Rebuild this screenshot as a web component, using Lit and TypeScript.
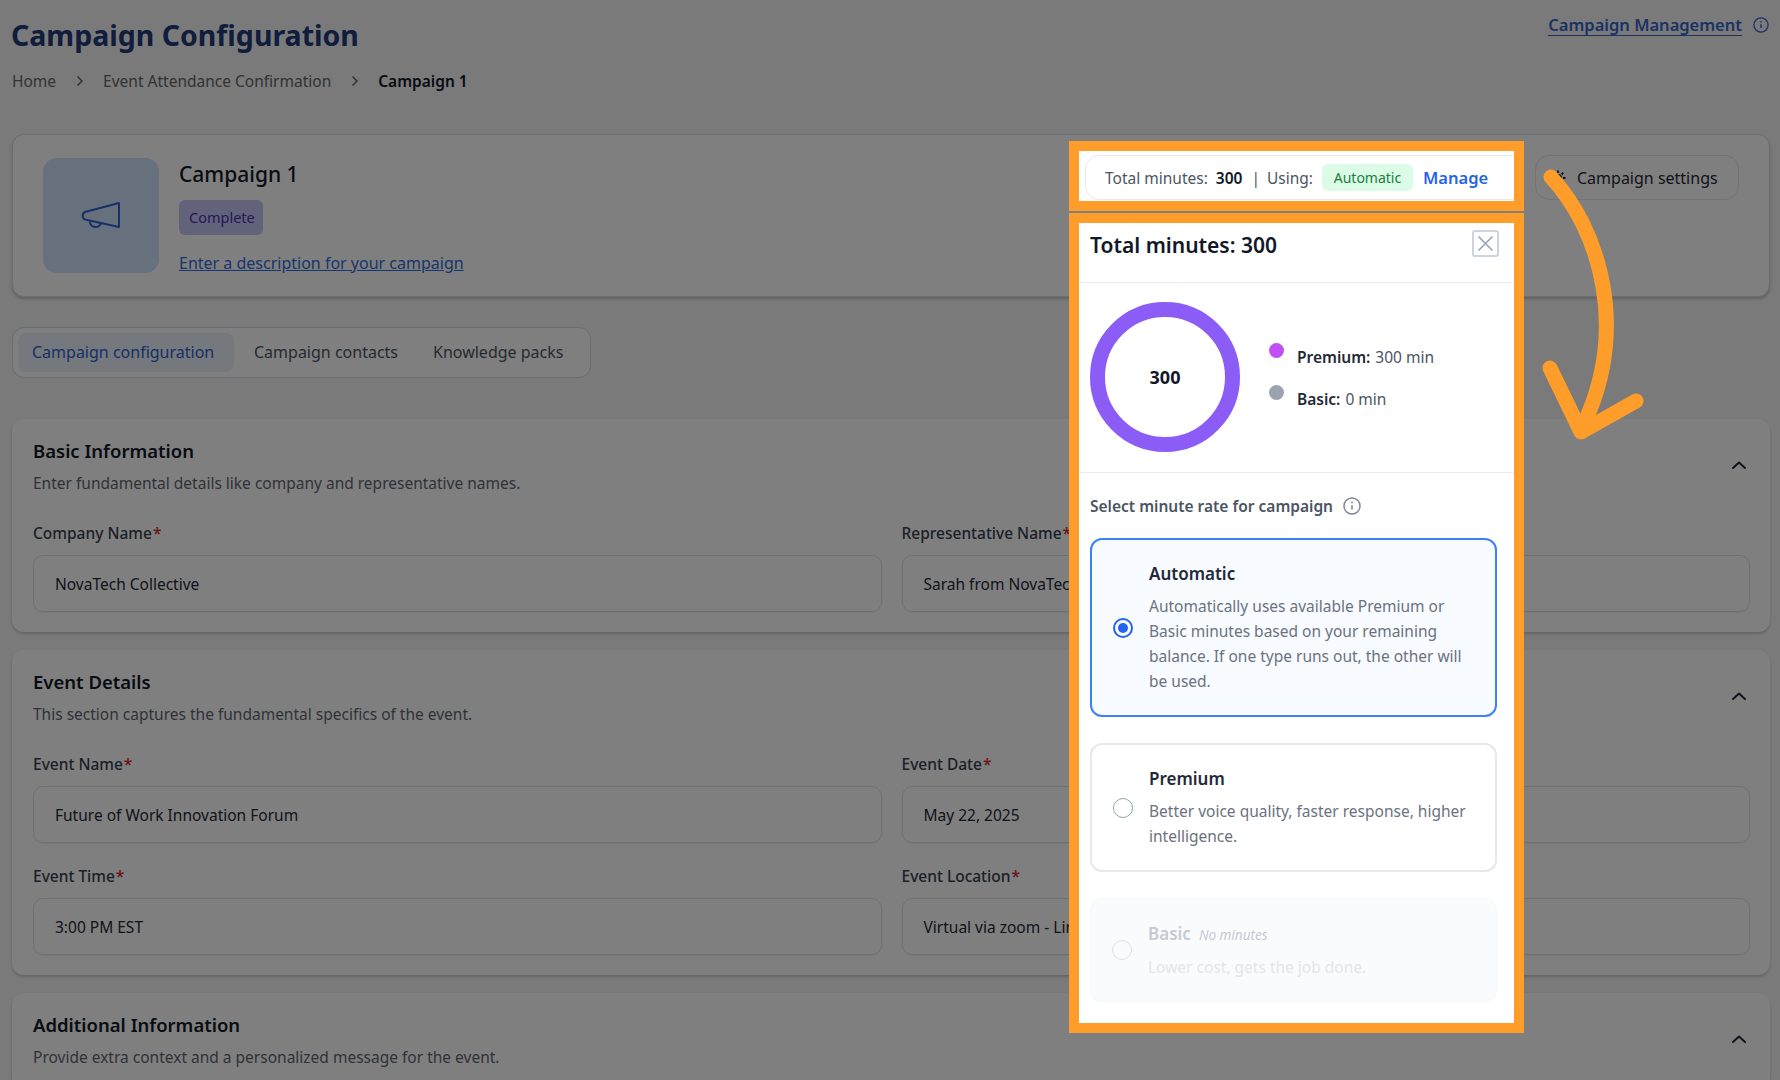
import { LitElement, html, css, svg } from "lit";
import { customElement } from "lit/decorators.js";

const info = (size: number, color: string) => html`<svg width=${size} height=${size} viewBox="0 0 18 18" fill="none" stroke=${color} stroke-width="1.4"><circle cx="9" cy="9" r="8"/><path d="M9 8.2v4.3" stroke-width="1.6"/><circle cx="9" cy="5.5" r=".9" fill=${color} stroke="none"/></svg>`;
const chevron = html`<svg class="chev" width="16" height="10" viewBox="0 0 16 10" fill="none" stroke="#1f2937" stroke-width="2" stroke-linecap="round" stroke-linejoin="round"><path d="M2 8l6-5.5L14 8"/></svg>`;
const crumbSep = html`<svg width="8" height="12" viewBox="0 0 8 12" fill="none" stroke="#666" stroke-width="1.5"><path d="M1.5 1.5L6 6l-4.5 4.5"/></svg>`;

interface Field { label: string; value: string; }
interface Section { title: string; desc: string; fields: Field[]; }

const sections: Section[] = [
  { title: "Basic Information", desc: "Enter fundamental details like company and representative names.", fields: [
    { label: "Company Name", value: "NovaTech Collective" },
    { label: "Representative Name", value: "Sarah from NovaTech" },
  ] },
  { title: "Event Details", desc: "This section captures the fundamental specifics of the event.", fields: [
    { label: "Event Name", value: "Future of Work Innovation Forum" },
    { label: "Event Date", value: "May 22, 2025" },
    { label: "Event Time", value: "3:00 PM EST" },
    { label: "Event Location", value: "Virtual via zoom - Link" },
  ] },
  { title: "Additional Information", desc: "Provide extra context and a personalized message for the event.", fields: [] },
];

@customElement("app-root")
export class AppRoot extends LitElement {
  static styles = css`
    :host { display: block; position: relative; width: 1780px; height: 1080px; overflow: hidden; background: #f4f4f6;
      font-family: "Noto Sans", "Open Sans", sans-serif; font-size: 15.5px; color: #1f2937; }
    * { box-sizing: border-box; }
    .page { padding: 15px 10px 0 12px; }
    .top { display: flex; justify-content: space-between; }
    h1 { margin: 0; font-size: 28.5px; line-height: 40px; font-weight: 700; color: #213a78; margin-left: -1px; }
    .mgmt { display: flex; align-items: flex-start; gap: 11px; margin-right: 1px; margin-top: -1px; }
    .mgmt a { font-size: 16.5px; font-weight: 600; line-height: 21px; color: #3566c9; border-bottom: 1.5px solid #3566c9; }
    .mgmt svg { margin-top: 3px; }
    .crumbs { display: flex; align-items: center; margin-top: 14px; line-height: 24px; color: #666; }
    .crumbs svg { margin: 0 19px 0 20px; }
    .crumbs b { color: #101828; font-weight: 600; }
    .hero { margin-top: 41px; height: 163px; background: #fff; border: 1px solid #d4dae3; border-radius: 12px; padding: 23px 30px;
      display: flex; box-shadow: 0 2px 3px rgba(0,0,0,.2); justify-content: space-between; }
    .tile { width: 116px; height: 115px; border-radius: 14px; background: #cfe0fa; display: flex; align-items: center; justify-content: center; }
    .hero-l { display: flex; gap: 20px; }
    .name { font-size: 21px; font-weight: 500; line-height: 30px; margin-top: 1px; color: #111827; }
    .badge { display: inline-block; margin-top: 11px; height: 35px; line-height: 35px; padding: 0 10px; width: 84px; text-align: center; font-size: 14.5px; border-radius: 6px; background: #c4c6f4; color: #4c2fb0; }
    .desc-link { display: block; margin-top: 16px; line-height: 24px; color: #2f6bdc; text-decoration: underline; font-size: 16px; }
    .settings { width: 204px; height: 45px; margin-top: -3px; margin-right: 0; border: 1px solid #e2e6ec; border-radius: 14px; display: flex; align-items: center; padding-left: 12px; gap: 9px; color: #1f2937; font-size: 16px; }
    .tabs { margin-top: 30px; width: 579px; height: 51px; border: 1px solid #d4dae3; border-radius: 12px; padding: 5px; display: flex; align-items: center; background: #fff; }
    .tab { height: 39px; line-height: 39px; padding: 0 14px; margin-right: 7px; border-radius: 8px; color: #4b5563; white-space: nowrap; font-size: 16px; }
    .tab.on { background: #eaf2fc; color: #2f5fc9; padding: 0 14px; margin-right: 6px; width: 216px; }
    .section { margin-top: 18px; background: #fff; border-radius: 12px; padding: 20px 20px 20px 21px; box-shadow: 0 2px 3px rgba(0,0,0,.18); }
    .section:first-of-type { margin-top: 41px; }
    .s-head { display: flex; justify-content: space-between; align-items: center; }
    .s-head h2 { margin: 0; font-size: 18.5px; line-height: 24px; font-weight: 600; color: #111827; }
    .s-head p { margin: 8px 0 0; line-height: 24px; color: #5f6673; font-size: 15.5px; }
    .chev { margin: 0 3px 4px 0; }
    .grid { display: grid; grid-template-columns: 1fr 1fr; gap: 21px 20px; margin-top: 26px; }
    .grid:empty { display: none; }
    .grid label { display: block; line-height: 24px; font-weight: 500; color: #374151; font-size: 15.5px; }
    .grid label i { color: #dc2626; font-style: normal; margin-left: 1px; }
    .input { margin-top: 10px; height: 57px; border: 1px solid #dde1e7; border-radius: 10px; padding: 0 21px; display: flex; align-items: center; color: #1f2937; box-shadow: 0 1px 2px rgba(0,0,0,.06); }
    .dim { position: absolute; inset: 0; background: rgba(0,0,0,.5); }

    .frame { position: absolute; left: 1069px; width: 455px; border: 10px solid #ff9d2a; background: #fff; overflow: hidden; }
    .f1 { top: 141px; height: 70px; padding: 4px 0 1px 6px; }
    .pill { width: 460px; height: 45px; border: 1.5px solid #e5e9f2; border-radius: 14px; display: flex; align-items: center; padding-left: 19px; color: #4b5563; font-size: 15.5px; white-space: nowrap; }
    .pill b { color: #111827; font-weight: 600; margin-left: 8px; }
    .pill .bar { margin: 0 7px 0 9px; }
    .chip { margin-left: 9px; width: 91px; height: 27px; line-height: 27px; text-align: center; background: #dcfce7; color: #15803d; border-radius: 6px; font-size: 14px; }
    .manage { margin-left: 10px; color: #2563eb; font-weight: 600; font-size: 16.5px; }
    .f2 { top: 213px; height: 820px; display: flex; flex-direction: column; }
    .p-head { height: 60px; flex: none; border-bottom: 1.5px solid #e8ebf0; display: flex; justify-content: space-between; align-items: flex-start; padding: 7px 15px 0 11px; }
    .p-head h3 { margin: 0; font-size: 21px; line-height: 30px; font-weight: 600; color: #111827; }
    .close { width: 27px; height: 27px; border: 2px solid #cbd5e1; border-radius: 3px; display: flex; align-items: center; justify-content: center; }
    .usage { height: 190px; flex: none; border-bottom: 1.5px solid #e8ebf0; padding: 19px 11px; display: flex; align-items: flex-start; }
    .ring { width: 150px; height: 150px; border-radius: 50%; border: 15px solid #8b5cf6; display: flex; align-items: center; justify-content: center; font-weight: 700; font-size: 18px; color: #111827; flex: none; }
    .legend { margin-left: 29px; margin-top: 41px; display: flex; flex-direction: column; gap: 16px; }
    .leg { display: flex; align-items: flex-start; line-height: 24px; color: #4b5563; }
    .leg span.dot { width: 15px; height: 15px; border-radius: 50%; margin: 5px 10px 0 0; margin-top: 0; }
    .leg b { color: #1f2937; font-weight: 600; margin-right: 5px; }
    .leg-t { margin-top: 2px; margin-left: 3px; }
    .rate { margin: 21px 0 0 11px; display: flex; align-items: center; gap: 10px; font-weight: 600; color: #4b5563; line-height: 24px; font-size: 15.5px; }
    .opt { margin: 20px 16px 0 11px; width: 407px; border: 2px solid #e5e8ed; border-radius: 12px; display: flex; align-items: center; padding: 0 21px 0 21px; }
    .opt + .opt { margin-top: 26px; }
    .opt.sel { height: 179px; border-color: #3b82f6; background: #f8fbff; }
    .opt.prem { height: 129px; }
    .opt.off { height: 104px; background: #fafbfc; border-color: #f6f7f9; border-width: 1px; }
    .radio { flex: none; width: 20px; height: 20px; border-radius: 50%; border: 1.5px solid #94a3b8; margin-right: 16px; }
    .sel .radio { border: 2px solid #2563eb; padding: 3px; background: #2563eb content-box; }
    .off .radio { border-color: #dde1e7; }
    .opt h4 { margin: 0 0 8px; font-size: 17px; line-height: 25px; font-weight: 600; color: #1f2937; }
    .opt p { margin: 0; line-height: 25px; color: #6b7280; font-size: 15.5px; }
    .off h4 { color: #c5cad3; margin-bottom: 7px; }
    .off h4 em { font-size: 13.5px; font-weight: 400; margin-left: 8px; color: #c5cad3; }
    .off p { color: #e3e6eb; }
    .arrow { position: absolute; left: 1530px; top: 160px; }
  `;

  renderSection(s: Section) {
    return html`<section class="section">
      <div class="s-head"><div><h2>${s.title}</h2><p>${s.desc}</p></div>${chevron}</div>
      <div class="grid">${s.fields.map(f => html`<div><label>${f.label}<i>*</i></label><div class="input">${f.value}</div></div>`)}</div>
    </section>`;
  }

  render() {
    return html`
      <div class="page">
        <div class="top">
          <h1>Campaign Configuration</h1>
          <div class="mgmt"><a>Campaign Management</a>${info(16, "#3566c9")}</div>
        </div>
        <div class="crumbs"><span>Home</span>${crumbSep}<span>Event Attendance Confirmation</span>${crumbSep}<b>Campaign 1</b></div>
        <div class="hero">
          <div class="hero-l">
            <div class="tile"><svg width="40" height="30" viewBox="0 0 40 30" fill="none" stroke="#2f62d0" stroke-width="2" stroke-linejoin="round"><path d="M38 2v24L4 18.5C1 17.800 1 12 4 11z"/><path d="M9 20.500c0 7 10 7 11 1.500"/></svg></div>
            <div>
              <div class="name">Campaign 1</div>
              <span class="badge">Complete</span>
              <a class="desc-link">Enter a description for your campaign</a>
            </div>
          </div>
          <div class="settings"><svg width="20" height="20" viewBox="0 0 20 20" fill="none" stroke="#1f2937" stroke-width="1.800"><circle cx="10" cy="10" r="3"/><path d="M10 2.500v2.500M10 15v2.500M2.500 10H5M15 10h2.500M4.700 4.700l1.800 1.800M13.500 13.500l1.800 1.800M15.300 4.700l-1.800 1.800M6.500 13.500l-1.800 1.800"/></svg>Campaign settings</div>
        </div>
        <div class="tabs"><div class="tab on">Campaign configuration</div><div class="tab">Campaign contacts</div><div class="tab">Knowledge packs</div></div>
        <div>${sections.map(s => this.renderSection(s))}</div>
      </div>
      <div class="dim"></div>

      <div class="frame f1"><div class="pill">Total minutes:<b>300</b><span class="bar">|</span>Using:<span class="chip">Automatic</span><span class="manage">Manage</span></div></div>
      <div class="frame f2">
        <div class="p-head"><h3>Total minutes: 300</h3><div class="close"><svg width="17" height="17" viewBox="0 0 17 17" stroke="#94a3b8" stroke-width="1.600"><path d="M1.500 1.500l14 14M15.500 1.500l-14 14"/></svg></div></div>
        <div class="usage">
          <div class="ring">300</div>
          <div class="legend">
            <div class="leg"><span class="dot" style="background:#c04ff5"></span><span class="leg-t"><b>Premium:</b>300 min</span></div>
            <div class="leg"><span class="dot" style="background:#9ca3af"></span><span class="leg-t"><b>Basic:</b>0 min</span></div>
          </div>
        </div>
        <div class="rate">Select minute rate for campaign ${info(18, "#7b8594")}</div>
        <div class="opt sel"><span class="radio"></span><div><h4>Automatic</h4><p>Automatically uses available Premium or Basic minutes based on your remaining balance. If one type runs out, the other will be used.</p></div></div>
        <div class="opt prem"><span class="radio"></span><div><h4>Premium</h4><p>Better voice quality, faster response, higher intelligence.</p></div></div>
        <div class="opt off"><span class="radio"></span><div><h4>Basic<em>No minutes</em></h4><p>Lower cost, gets the job done.</p></div></div>
      </div>
      <svg class="arrow" width="120" height="290" viewBox="0 0 120 290" fill="none" stroke="#ff9d2a" stroke-width="15" stroke-linecap="round" stroke-linejoin="round">
        ${svg`<path d="M21 17C70 70 100 170 52 268"/><path d="M20 208L51 272L106 241"/>`}
      </svg>
    `;
  }
}
